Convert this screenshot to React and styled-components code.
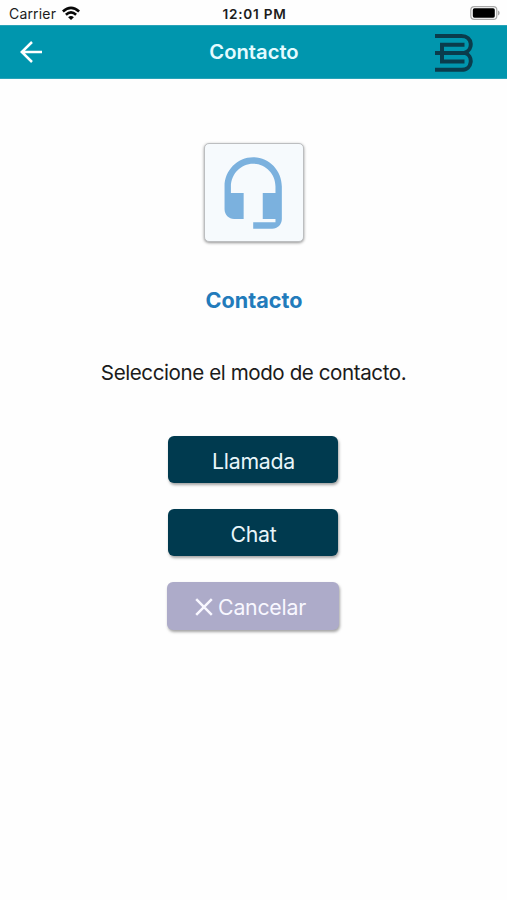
import React from "react";
import styled, { createGlobalStyle } from "styled-components";

const GlobalStyle = createGlobalStyle`
  * { box-sizing: border-box; }
  body {
    margin: 0;
    background: #fff;
    font-family: Inter, "Liberation Sans", sans-serif;
  }
`;

const Screen = styled.div`
  width: 507px;
  height: 900px;
  background: #fefefe;
  overflow: hidden;
`;

const StatusBar = styled.div`
  height: 25px;
  display: grid;
  grid-template-columns: 1fr auto 1fr;
  align-items: center;
  padding: 1px 7px 0 9px;
  color: #1c1c1c;
`;

const Carrier = styled.div`
  display: flex;
  align-items: center;
  gap: 6px;
  font-size: 14px;
  letter-spacing: 0.18px;
`;

const Clock = styled.div`
  padding-top: 2px;
  font-size: 13.6px;
  font-weight: 600;
  letter-spacing: 0.75px;
`;

const BatterySlot = styled.div`
  display: flex;
  justify-content: flex-end;
`;

const Header = styled.header`
  height: 54px;
  display: grid;
  grid-template-columns: 1fr auto 1fr;
  align-items: center;
  padding: 0 34px 0 19px;
  background: #0096ae;
  border-top: 1px solid #29a3b8;
  border-bottom: 1px solid #29a3b8;
`;

const BackButton = styled.button`
  display: flex;
  padding: 0;
  border: 0;
  background: none;
  color: #fff;
`;

const HeaderTitle = styled.h1`
  margin: 0 0 0 -14px;
  transform: translateX(15px);
  color: #e4fbff;
  font-size: 20.2px;
  line-height: 24px;
  font-weight: 600;
`;

const LogoSlot = styled.div`
  display: flex;
  justify-content: flex-end;
  padding-top: 2px;
`;

const Content = styled.main`
  display: flex;
  flex-direction: column;
  align-items: center;
  padding-top: 64px;
`;

const IconCard = styled.div`
  width: 100px;
  height: 99px;
  display: flex;
  justify-content: center;
  align-items: center;
  border: 1px solid #bcbec0;
  border-radius: 5px;
  background: #f6fafd;
  box-shadow: 0 1px 3px rgba(0, 0, 0, 0.42);
`;

const SectionTitle = styled.h2`
  margin: 45px 0 0 1px;
  font-size: 21.6px;
  line-height: 27px;
  font-weight: 700;
  color: #227bbb;
`;

const Prompt = styled.p`
  margin: 45px 0 0;
  font-size: 20.6px;
  line-height: 28px;
  letter-spacing: -0.43px;
  color: #1b1b1b;
  white-space: nowrap;
`;

const Actions = styled.div`
  display: flex;
  flex-direction: column;
  align-items: center;
  gap: 26px;
  margin: 49px 1px 0 0;
`;

const ActionButton = styled.button`
  width: ${(p) => (p.$muted ? 172 : 170)}px;
  height: ${(p) => (p.$muted ? 48 : 47)}px;
  display: flex;
  justify-content: center;
  align-items: center;
  gap: 5px;
  padding: ${(p) => (p.$muted ? "2px 5px 0 0" : "3px 0 0 1px")};
  border: 0;
  border-radius: 6px;
  background: ${(p) => (p.$muted ? "#adabc9" : "#003a4f")};
  color: ${(p) => (p.$muted ? "#f8f7ff" : "#e9f6fa")};
  font-family: inherit;
  font-size: 21.3px;
  letter-spacing: -0.25px;
  font-weight: 400;
  box-shadow: 1px 2px 3px rgba(0, 0, 0, 0.36);
`;

function WifiIcon() {
  return (
    <svg width="18" height="15" viewBox="0 0 18 15" fill="none" stroke="#080808" strokeWidth="2.6">
      <path d="M0.9 5.5Q9-1.9 17.1 5.5" />
      <path d="M3.9 8.8Q9 4.1 14.1 8.8" />
      <path d="M9 14.1 6.1 11.2Q9 8.7 11.9 11.2Z" fill="#080808" stroke="none" />
    </svg>
  );
}

function BatteryIcon() {
  return (
    <svg width="30" height="14" viewBox="0 0 30 14">
      <rect x="0.8" y="0.7" width="26" height="12.6" rx="3.4" fill="#fff" stroke="#a9a9a9" strokeWidth="1.2" />
      <rect x="2.8" y="2.3" width="22" height="9.4" rx="1.6" fill="#000" />
      <path d="M28 4.6v4.8c2.2-.8 2.2-4 0-4.8Z" fill="#a9a9a9" />
    </svg>
  );
}

function BackIcon() {
  return (
    <svg width="24" height="24" viewBox="0 0 24 24" fill="none" stroke="currentColor" strokeWidth="2.5">
      <path d="M13 2 2.8 12 13 22M3 12h20" />
    </svg>
  );
}

function BrandLogo() {
  return (
    <svg width="38" height="40" viewBox="0 0 38 40" fill="none" stroke="#0a3c4c" strokeWidth="4">
      <path d="M0 3h26.5C38 3 38.5 17 29.5 19.9 38.5 22 38 36.8 26.5 36.8H0" />
      <path d="M29.5 11.7H7v16.8h22.5M0 19.9h30" />
    </svg>
  );
}

function HeadsetIcon() {
  return (
    <svg width="76.4" height="78" viewBox="0 0 24 24" preserveAspectRatio="none" fill="#7bb1de">
      <path d="M12 1c-4.97 0-9 4.03-9 9v7c0 1.66 1.34 3 3 3h3v-8H5v-2c0-3.87 3.13-7 7-7s7 3.13 7 7v2h-4v8h4v1h-7v2h6c1.66 0 3-1.34 3-3V10c0-4.97-4.03-9-9-9z" />
    </svg>
  );
}

function CloseIcon() {
  return (
    <svg width="18" height="18" viewBox="0 0 18 18" fill="none" stroke="currentColor" strokeWidth="2.5">
      <path d="m1.2 1.2 15.6 15.6M16.8 1.2 1.2 16.8" />
    </svg>
  );
}

export default function App() {
  return (
    <Screen>
      <GlobalStyle />
      <StatusBar>
        <Carrier>
          Carrier
          <WifiIcon />
        </Carrier>
        <Clock>12:01 PM</Clock>
        <BatterySlot>
          <BatteryIcon />
        </BatterySlot>
      </StatusBar>
      <Header>
        <BackButton aria-label="Volver">
          <BackIcon />
        </BackButton>
        <HeaderTitle>Contacto</HeaderTitle>
        <LogoSlot>
          <BrandLogo />
        </LogoSlot>
      </Header>
      <Content>
        <IconCard>
          <HeadsetIcon />
        </IconCard>
        <SectionTitle>Contacto</SectionTitle>
        <Prompt>Seleccione el modo de contacto.</Prompt>
        <Actions>
          <ActionButton>Llamada</ActionButton>
          <ActionButton>Chat</ActionButton>
          <ActionButton $muted>
            <CloseIcon />
            Cancelar
          </ActionButton>
        </Actions>
      </Content>
    </Screen>
  );
}
